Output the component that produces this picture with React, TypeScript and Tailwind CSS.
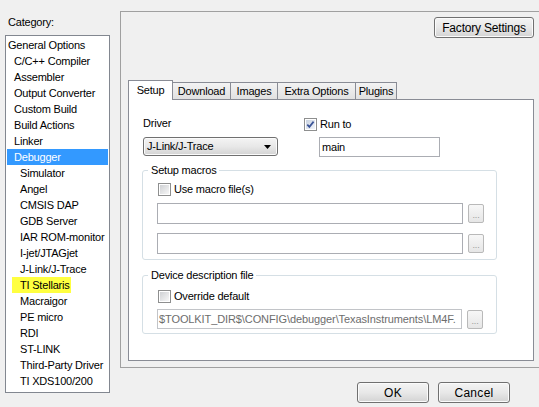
import React from "react";

const items: { label: string; level: number; selected?: boolean; marked?: boolean }[] = [
  { label: "General Options", level: 0 },
  { label: "C/C++ Compiler", level: 1 },
  { label: "Assembler", level: 1 },
  { label: "Output Converter", level: 1 },
  { label: "Custom Build", level: 1 },
  { label: "Build Actions", level: 1 },
  { label: "Linker", level: 1 },
  { label: "Debugger", level: 1, selected: true },
  { label: "Simulator", level: 2 },
  { label: "Angel", level: 2 },
  { label: "CMSIS DAP", level: 2 },
  { label: "GDB Server", level: 2 },
  { label: "IAR ROM-monitor", level: 2 },
  { label: "I-jet/JTAGjet", level: 2 },
  { label: "J-Link/J-Trace", level: 2 },
  { label: "TI Stellaris", level: 2, marked: true },
  { label: "Macraigor", level: 2 },
  { label: "PE micro", level: 2 },
  { label: "RDI", level: 2 },
  { label: "ST-LINK", level: 2 },
  { label: "Third-Party Driver", level: 2 },
  { label: "TI XDS100/200", level: 2 },
];

function Check({ checked }: { checked?: boolean }) {
  return (
    <span className="flex w-[13px] h-[13px] shrink-0 border border-[#8e8f8f] bg-white p-[1px]">
      <span
        className={
          checked
            ? "flex flex-1 items-center justify-center bg-linear-to-br from-[#c9d2e0] to-[#f2f5fa]"
            : "flex flex-1 bg-linear-to-br from-[#cfd1d4] to-[#f7f7f7]"
        }
      >
        {checked && (
          <svg width="9" height="9" viewBox="0 0 9 9">
            <path d="M1.3 4.6 L3.4 6.9 L7.6 1.6" fill="none" stroke="#3b5497" strokeWidth="1.7" />
          </svg>
        )}
      </span>
    </span>
  );
}

function WinButton({ label, className }: { label: string; className: string }) {
  return (
    <div
      className={
        "flex items-center justify-center rounded-[3px] border border-[#707070] bg-linear-to-b from-[#f4f4f4] via-[#e8e8e8] to-[#d3d3d3] shadow-[inset_0_0_0_1px_#fbfbfb] text-black " +
        className
      }
    >
      {label}
    </div>
  );
}

function Browse() {
  return (
    <div className="ml-[5px] flex h-[19px] w-[16px] shrink-0 items-end justify-center rounded-[2px] border border-[#b9b9b9] bg-linear-to-b from-[#f7f7f7] to-[#e6e6e6] pb-[2px] text-[9px] leading-[9px] text-[#9a9a9a]">
      ...
    </div>
  );
}

function Tab({ label, w, selected, first }: { label: string; w: string; selected?: boolean; first?: boolean }) {
  if (selected) {
    return (
      <div
        className={
          "relative z-10 -mb-px flex h-[20px] items-start justify-center border-x border-t border-[#898c95] bg-white pt-[3px] leading-[13px] " +
          w
        }
      >
        {label}
      </div>
    );
  }
  return (
    <div
      className={
        "flex h-[17px] items-center justify-center border-x border-t border-[#898c95] bg-linear-to-b from-[#f3f3f3] to-[#e1e1e1] leading-[13px] " +
        (first ? "" : "-ml-px ") +
        w
      }
    >
      {label}
    </div>
  );
}

export default function App() {
  return (
    <div className="flex h-[407px] w-[539px] overflow-hidden bg-[#f0f0f0] font-['Liberation_Sans',Arial,sans-serif] text-[11px] tracking-[-0.2px] text-black">
      {/* Left column */}
      <div className="flex w-[120px] shrink-0 flex-col pl-[5px]">
        <div className="ml-[3px] mt-[16px] h-[13px] leading-[13px]">Category:</div>
        <div className="mt-[6px] h-[358px] w-[105px] border border-[#828790] bg-white pt-[1px]">
          {items.map((it) => {
            const pl = it.level === 0 ? "pl-[2px]" : it.level === 1 ? "pl-[8px]" : "pl-[14px]";
            if (it.selected) {
              return (
                <div key={it.label} className="mx-[1px] h-[16px] whitespace-nowrap bg-[#3399ff] pl-[7px] leading-[16px] text-white">
                  {it.label}
                </div>
              );
            }
            return (
              <div key={it.label} className={"h-[16px] whitespace-nowrap leading-[16px] " + pl}>
                {it.marked ? (
                  <span className="-ml-[8px] inline-block bg-[#ffff40] pl-[8px] pr-[1px]">{it.label}</span>
                ) : (
                  it.label
                )}
              </div>
            );
          })}
        </div>
      </div>

      {/* Right column */}
      <div className="flex flex-1 flex-col">
        <div className="mt-[11px] h-[357px] border-y border-l border-[#a0a0a0] pl-[7px]">
          <div className="flex w-[406px] flex-col">
            <div className="mt-[5px] flex justify-end">
              <WinButton label="Factory Settings" className="h-[21px] w-[100px] text-[12px]" />
            </div>

            {/* Tabs */}
            <div className="mt-[42px] flex h-[19px] items-end">
              <Tab label="Setup" w="w-[45px]" selected first />
              <Tab label="Download" w="w-[59px]" />
              <Tab label="Images" w="w-[48px]" />
              <Tab label="Extra Options" w="w-[79px]" />
              <Tab label="Plugins" w="w-[42px]" />
            </div>

            {/* Tab page */}
            <div className="h-[262px] w-[406px] border border-[#898c95] bg-white">
              <div className="flex pt-[17px]">
                <div className="ml-[14px] flex w-[135px] flex-col">
                  <div className="h-[13px] leading-[13px]">Driver</div>
                  <div className="mt-[7px] flex h-[19px] items-center justify-between rounded-[3px] border border-[#707070] bg-linear-to-b from-[#f4f4f4] via-[#e8e8e8] to-[#d3d3d3] pl-[3px] pr-[6px] shadow-[inset_0_0_0_1px_#fbfbfb]">
                    <span className="leading-[13px]">J-Link/J-Trace</span>
                    <svg width="7" height="4" viewBox="0 0 7 4">
                      <polygon points="0,0 7,0 3.5,4" fill="#000" />
                    </svg>
                  </div>
                </div>
                <div className="ml-[26px] flex flex-col">
                  <div className="mt-[1px] flex h-[13px] items-center">
                    <Check checked />
                    <span className="ml-[3px] leading-[13px]">Run to</span>
                  </div>
                  <div className="ml-[15px] mt-[6px] flex h-[20px] w-[121px] items-center border border-[#abadb3] bg-white pl-[2px] leading-[13px]">
                    main
                  </div>
                </div>
              </div>

              {/* Setup macros */}
              <div className="ml-[13px] mt-[13px] flex w-[355px] flex-col rounded-[3px] border border-[#d5dfe5] pb-[5px]">
                <div className="-mt-[7px] ml-[5px] h-[13px] w-fit bg-white px-[3px] leading-[13px]">Setup macros</div>
                <div className="ml-[15px] mt-[6px] flex h-[13px] items-center">
                  <Check />
                  <span className="ml-[3px] leading-[13px]">Use macro file(s)</span>
                </div>
                <div className="ml-[14px] mt-[7px] flex items-center">
                  <div className="h-[21px] w-[306px] border border-[#abadb3] bg-white" />
                  <Browse />
                </div>
                <div className="ml-[14px] mt-[9px] flex items-center">
                  <div className="h-[21px] w-[306px] border border-[#abadb3] bg-white" />
                  <Browse />
                </div>
              </div>

              {/* Device description file */}
              <div className="ml-[13px] mt-[15px] flex w-[355px] flex-col rounded-[3px] border border-[#d5dfe5] pb-[4px]">
                <div className="-mt-[7px] ml-[5px] h-[13px] w-fit bg-white px-[3px] leading-[13px]">Device description file</div>
                <div className="ml-[15px] mt-[8px] flex h-[13px] items-center">
                  <Check />
                  <span className="ml-[3px] leading-[13px]">Override default</span>
                </div>
                <div className="ml-[14px] mt-[6px] flex items-center">
                  <div className="flex h-[20px] w-[305px] shrink-0 items-center overflow-hidden whitespace-nowrap border border-[#c2c4c8] bg-white pl-[1px] leading-[13px] tracking-[-0.1px] text-[#6d6d6d]">
                    $TOOLKIT_DIR$\CONFIG\debugger\TexasInstruments\LM4F.
                  </div>
                  <Browse />
                </div>
              </div>
            </div>
          </div>
        </div>

        {/* Bottom buttons */}
        <div className="mt-[14px] flex justify-end gap-[9px] pr-[29px]">
          <WinButton label="OK" className="h-[21px] w-[72px] text-[12px] tracking-[0.3px]" />
          <WinButton label="Cancel" className="h-[21px] w-[72px] text-[12px] tracking-[0.3px]" />
        </div>
      </div>
    </div>
  );
}
